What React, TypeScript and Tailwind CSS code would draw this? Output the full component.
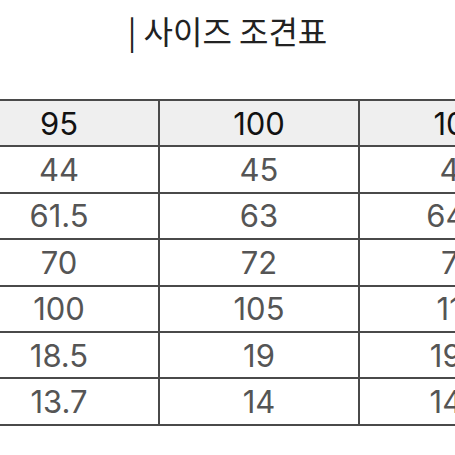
import React from 'react';

const header = ['95', '100', '105'];
const rows = [
  ['44', '45', '46'],
  ['61.5', '63', '64.5'],
  ['70', '72', '74'],
  ['100', '105', '110'],
  ['18.5', '19', '19.5'],
  ['13.7', '14', '14.3'],
];

const App = () => {
  return (
    <div className="w-[455px] h-[455px] bg-white overflow-hidden">
      {/* TITLE */}
      <div className="pt-[10px] h-[99px] text-center text-[32px] leading-[40px] text-[#222] font-['Noto_Sans_CJK_KR',sans-serif]">
        | 사이즈 조견표
      </div>

      {/* SIZE TABLE */}
      <div className="ml-[-42px]">
        <table className="w-[600px] min-w-[600px] border-collapse table-fixed font-['Inter','Noto_Sans',sans-serif] text-[31px]">
          <tbody>
            <tr className="bg-[#efefef] text-[#111]">
              {header.map((h) => (
                <td key={h} className="w-[200px] h-[46.4px] p-0 text-center leading-none border-2 border-[#4a4a4a]">
                  {h}
                </td>
              ))}
            </tr>
            {rows.map((r, i) => (
              <tr key={i} className="text-[#555]">
                {r.map((c, j) => (
                  <td key={j} className="w-[200px] h-[46.4px] p-0 text-center leading-none border-2 border-[#4a4a4a]">
                    {c}
                  </td>
                ))}
              </tr>
            ))}
          </tbody>
        </table>
      </div>
    </div>
  );
};

export default App;
